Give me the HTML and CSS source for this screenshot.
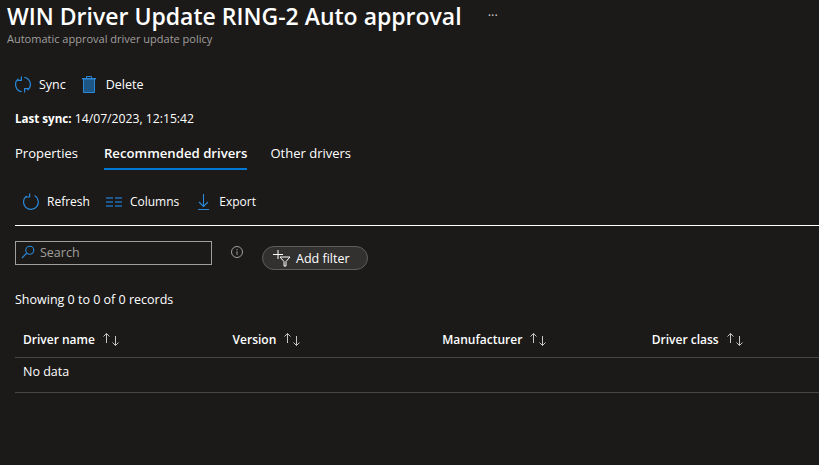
FILE: index.html
```html
<!DOCTYPE html>
<html lang="en">

<head>
    <meta charset="UTF-8">
    <title>WIN Driver Update RING-2 Auto approval</title>
    <link rel="stylesheet" href="styles.css">
</head>

<body>
    <div class="header">
        <div class="title-row">
            <h1>WIN Driver Update RING-2 Auto approval</h1>
            <span class="more">···</span>
        </div>
        <p class="subtitle">Automatic approval driver update policy</p>
    </div>

    <div class="content">
        <div class="actions">
            <span class="action">
                <svg width="16" height="17" viewBox="0 0 16 17" fill="none" stroke="#2b88d8" stroke-width="1.2">
                    <path d="M3.4 2.8A7.3 7.3 0 0 0 6.6 15.7M12.6 14.2A7.3 7.3 0 0 0 9.4 1.3"/>
                    <path d="M6.4 0.6V4.4H2.4M9.6 16.4V12.6H13.6"/>
                </svg>
                Sync
            </span>
            <span class="action delete">
                <svg width="14" height="17" viewBox="0 0 14 17">
                    <path d="M4.5 2.5V.5h5v2" fill="none" stroke="#2b88d8"/>
                    <path d="M0 2h14v1.4H0z" fill="#2b88d8"/>
                    <path d="M1.5 3v13.5h11V3z" fill="#1d5685" stroke="#2b88d8"/>
                </svg>
                Delete
            </span>
        </div>

        <p class="last-sync"><strong>Last sync:</strong> 14/07/2023, 12:15:42</p>

        <div class="tabs">
            <span class="tab">Properties</span>
            <span class="tab active">Recommended drivers</span>
            <span class="tab">Other drivers</span>
        </div>

        <div class="commands">
            <span class="command">
                <svg width="16" height="17" viewBox="0 0 16 17" fill="none" stroke="#2b88d8" stroke-width="1.2">
                    <path d="M3.6 3A7.4 7.4 0 1 0 11.6 2.6"/>
                    <path d="M6.6 0.4V4H2.8"/>
                </svg>
                Refresh
            </span>
            <span class="command">
                <svg width="16" height="10" viewBox="0 0 16 10" fill="none" stroke="#1f6fb5" stroke-width="1.4">
                    <path d="M0 1h7M0 5h7M0 9h7M9 1h7M9 5h7M9 9h7"/>
                </svg>
                Columns
            </span>
            <span class="command export">
                <svg width="11" height="16" viewBox="0 0 11 16" fill="none" stroke="#2b88d8" stroke-width="1.1">
                    <path d="M5.5 0v12.5M1 8l4.5 4.5L10 8M0 15.5h11"/>
                </svg>
                Export
            </span>
        </div>

        <div class="filters">
            <div class="search">
                <svg width="14" height="14" viewBox="0 0 14 14" fill="none" stroke="#2b88d8" stroke-width="1.1">
                    <circle cx="8.8" cy="5.2" r="4"/>
                    <path d="M5.8 8L1 13"/>
                </svg>
                <span>Search</span>
            </div>
            <svg class="info" width="12" height="12" viewBox="0 0 12 12" fill="none" stroke="#a19f9d">
                <circle cx="6" cy="6" r="5.5"/>
                <path d="M6 5.2v3.6M6 3v1.2"/>
            </svg>
            <button class="add-filter">
                <svg width="19" height="17" viewBox="0 0 19 17" fill="none" stroke="#fff" stroke-width="1">
                    <path d="M0 4.5h10M5 0v9"/>
                    <path d="M7 7h10l-4 4.5V16h-2v-4.5z"/>
                </svg>
                Add filter
            </button>
        </div>

        <p class="records">Showing 0 to 0 of 0 records</p>

        <div class="grid head">
            <div class="col">Driver name
                <svg class="sort" width="16" height="13" viewBox="0 0 16 13" fill="none" stroke="#c8c6c4"><path d="M3.5 10V.5M.5 3.5l3-3 3 3M12.5 3v9.5M9.5 9.5l3 3 3-3"/></svg>
            </div>
            <div class="col">Version
                <svg class="sort" width="16" height="13" viewBox="0 0 16 13" fill="none" stroke="#c8c6c4"><path d="M3.5 10V.5M.5 3.5l3-3 3 3M12.5 3v9.5M9.5 9.5l3 3 3-3"/></svg>
            </div>
            <div class="col">Manufacturer
                <svg class="sort" width="16" height="13" viewBox="0 0 16 13" fill="none" stroke="#c8c6c4"><path d="M3.5 10V.5M.5 3.5l3-3 3 3M12.5 3v9.5M9.5 9.5l3 3 3-3"/></svg>
            </div>
            <div class="col">Driver class
                <svg class="sort" width="16" height="13" viewBox="0 0 16 13" fill="none" stroke="#c8c6c4"><path d="M3.5 10V.5M.5 3.5l3-3 3 3M12.5 3v9.5M9.5 9.5l3 3 3-3"/></svg>
            </div>
        </div>
        <div class="no-data">No data</div>
    </div>
</body>

</html>
```

FILE: styles.css
```css
* {
    margin: 0;
    padding: 0;
    box-sizing: border-box;
}

body {
    height: 465px;
    overflow: hidden;
    background-color: #1b1a19;
    color: #fff;
    font-family: "Open Sans", "Noto Sans", sans-serif;
    font-size: 12.5px;
}

.header {
    padding-left: 7px;
}

.title-row {
    display: flex;
    height: 31px;
    align-items: center;
}

h1 {
    font-size: 23px;
    font-weight: 600;
    white-space: nowrap;
}

.more {
    margin-left: 26px;
    margin-top: -1px;
    font-size: 13px;
    color: #c8c6c4;
}

.subtitle {
    margin-top: 1px;
    font-size: 11px;
    line-height: 14px;
    color: #a19f9d;
}

.content {
    padding-left: 15px;
}

.actions {
    display: flex;
    margin-top: 27px;
    height: 22px;
    align-items: center;
}

.action {
    display: flex;
    align-items: center;
    gap: 8px;
    margin-right: 16px;
}

.action.delete {
    gap: 10px;
}

.last-sync {
    margin-top: 16px;
    font-size: 12.2px;
    line-height: 16px;
}

.last-sync strong {
    font-size: 11.6px;
}

.tabs {
    display: flex;
    margin-top: 17px;
    gap: 26px;
    font-size: 13px;
}

.tab {
    height: 26px;
    line-height: 18px;
}

.tab.active {
    margin-right: -3px;
    font-size: 13.2px;
    font-weight: 600;
    border-bottom: 2px solid #0078d4;
}

.commands {
    display: flex;
    height: 56px;
    padding: 8px 0 0 8px;
    align-items: center;
    border-bottom: 1px solid #fff;
    font-size: 12px;
}

.command {
    display: flex;
    align-items: center;
    gap: 8px;
    margin-right: 16px;
}

.command.export {
    gap: 10px;
    margin-left: 3px;
}

.filters {
    display: flex;
    align-items: flex-start;
    margin-top: 15px;
}

.search {
    display: flex;
    align-items: center;
    gap: 5px;
    width: 197px;
    height: 24px;
    padding: 0 0 2px 5px;
    border: 1px solid #a19f9d;
    color: #a19f9d;
}

.info {
    margin: 5px 0 0 19px;
}

.add-filter {
    display: flex;
    align-items: center;
    gap: 4px;
    width: 106px;
    height: 24px;
    margin: 5px 0 0 19px;
    padding-left: 10px;
    border: 1px solid #605e5c;
    border-radius: 12px;
    background-color: #323130;
    color: #fff;
    font: inherit;
}

.records {
    margin-top: 21px;
    line-height: 18px;
}

.grid {
    display: grid;
    grid-template-columns: repeat(4, 209.6px);
}

.head {
    margin-top: 10px;
    height: 39px;
    padding-top: 2px;
    align-items: center;
    border-bottom: 1px solid #484644;
    font-size: 12px;
    font-weight: 600;
}

.col {
    display: flex;
    align-items: center;
    gap: 8px;
    padding-left: 8px;
}

.no-data {
    height: 35px;
    padding: 5px 0 0 8px;
    border-bottom: 1px solid #484644;
}
```
